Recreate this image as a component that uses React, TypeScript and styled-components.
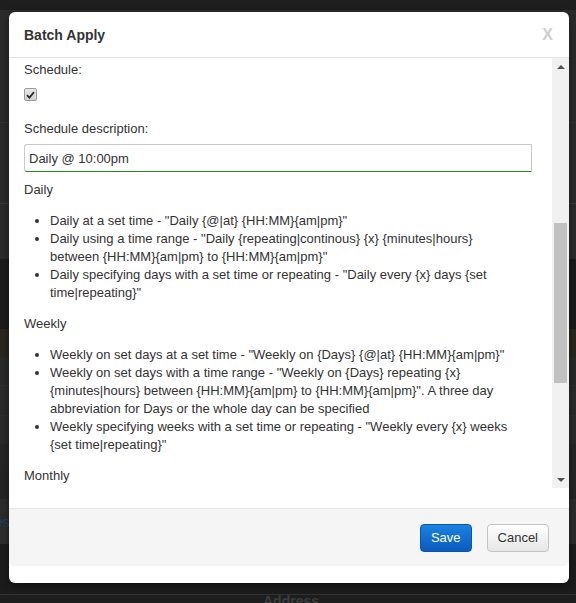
import React from "react";
import styled, { createGlobalStyle } from "styled-components";

const GlobalStyle = createGlobalStyle`
  html, body {
    margin: 0;
    padding: 0;
    background: #1e1e1e;
  }
  body {
    font-family: "Liberation Sans", Arial, Helvetica, sans-serif;
    font-size: 13px;
    line-height: 18px;
    color: #333;
  }
`;

interface Band {
  height: number;
  color: string;
  line?: string;
  text?: string;
  textColor?: string;
  textLeft?: number;
  bold?: boolean;
}

const bands: Band[] = [
  { height: 10, color: "#1e1e1e" },
  { height: 112, color: "#2b2b2b", line: "#333" },
  { height: 80, color: "#2b2b2b", line: "#3a3a3a" },
  { height: 55, color: "#2b2b2b" },
  { height: 70, color: "#1c1c1c" },
  { height: 28, color: "#2a2720" },
  { height: 28, color: "#2a2a2a", line: "#2f2f2f" },
  { height: 29, color: "#2b2b2b", line: "#2f2f2f" },
  { height: 28, color: "#2b2b2b" },
  { height: 27, color: "#262626" },
  { height: 28, color: "#252525" },
  { height: 45, color: "#2d2d2d", text: "es", textColor: "#23405e", textLeft: -5 },
  { height: 50, color: "#1c1c1c", line: "#333" },
  { height: 12, color: "#1e1e1e", text: "Address", textColor: "#3c3c3c", textLeft: 263, bold: true },
];

const Page = styled.div`
  position: relative;
  width: 576px;
  height: 603px;
  overflow: hidden;
  display: flex;
  flex-direction: column;
`;

const Stripe = styled.div<{ $h: number; $bg: string; $line?: string }>`
  flex: 0 0 ${({ $h }) => $h}px;
  background: ${({ $bg }) => $bg};
  border-bottom: ${({ $line }) => ($line ? `1px solid ${$line}` : "none")};
  display: flex;
  align-items: center;
  overflow: hidden;
`;

const StripeText = styled.span<{ $color: string; $left: number; $bold?: boolean }>`
  margin-left: ${({ $left }) => $left}px;
  color: ${({ $color }) => $color};
  font-size: 14px;
  font-weight: ${({ $bold }) => ($bold ? 700 : 400)};
  white-space: nowrap;
`;

const Dialog = styled.div`
  position: absolute;
  top: 12px;
  left: 9px;
  width: 560px;
  height: 571px;
  background: #fff;
  border-radius: 6px;
  box-shadow: 0 3px 9px rgba(0, 0, 0, 0.5);
  display: flex;
  flex-direction: column;
  overflow: hidden;
`;

const Header = styled.div`
  flex: none;
  height: 45px;
  border-bottom: 1px solid #e5e5e5;
  display: flex;
  align-items: center;
  justify-content: space-between;
  padding: 0 16px 0 15px;
`;

const Title = styled.h4`
  margin: 0;
  font-size: 14px;
  font-weight: 700;
  color: #333;
`;

const Close = styled.span`
  font-size: 16px;
  font-weight: 700;
  color: #cfcfcf;
  cursor: pointer;
`;

const Body = styled.div`
  flex: none;
  height: 430px;
  min-height: 0;
  display: flex;
  padding-bottom: 20px;
`;

const Content = styled.div`
  flex: 1;
  min-width: 0;
  overflow: hidden;
  padding: 3px 20px 0 15px;
`;

const Label = styled.div<{ $gap?: number }>`
  margin-top: ${({ $gap }) => $gap ?? 0}px;
`;

const CheckBox = styled.span`
  margin-top: 9px;
  display: flex;
  align-items: center;
  justify-content: center;
  width: 11px;
  height: 11px;
  border: 1px solid #9a9a9a;
  border-radius: 2px;
  background: linear-gradient(#e8e8e8, #d2d2d2);
`;

const TextInput = styled.input`
  display: block;
  box-sizing: border-box;
  width: 100%;
  height: 28px;
  margin-top: 6px;
  padding: 0 4px;
  border: 1px solid #c9c9c9;
  border-bottom-color: #1e8c1e;
  border-radius: 3px 0 0 3px;
  font: inherit;
  color: #333;
  outline: none;
`;

const SectionTitle = styled.p<{ $gap?: number }>`
  margin: ${({ $gap }) => $gap ?? 0}px 0 0;
`;

const List = styled.ul`
  margin: 13px 0;
  padding-left: 26px;
  list-style: disc;
`;

const Scrollbar = styled.div`
  flex: 0 0 17px;
  background: #f1f1f1;
  display: flex;
  flex-direction: column;
`;

const ArrowButton = styled.div<{ $down?: boolean }>`
  flex: 0 0 17px;
  display: flex;
  align-items: center;
  justify-content: center;

  &::before {
    content: "";
    width: 0;
    height: 0;
    border-left: 4px solid transparent;
    border-right: 4px solid transparent;
    ${({ $down }) =>
      $down ? "border-top: 4px solid #505050;" : "border-bottom: 4px solid #505050;"}
  }
`;

const Track = styled.div`
  flex: 1;
  display: flex;
  flex-direction: column;
`;

const Thumb = styled.div`
  margin: 0 2px;
  background: #c1c1c1;
`;

const Footer = styled.div`
  flex: none;
  height: 57px;
  border-top: 1px solid #e5e5e5;
  background: #f5f5f5;
  border-radius: 0 0 6px 6px;
  display: flex;
  align-items: center;
  justify-content: flex-end;
  gap: 15px;
  padding: 0 20px;
`;

const Button = styled.button<{ $primary?: boolean }>`
  height: 28px;
  padding: 0 10px;
  font: inherit;
  font-size: 13px;
  border-radius: 4px;
  cursor: pointer;
  color: ${({ $primary }) => ($primary ? "#fff" : "#333")};
  border: 1px solid ${({ $primary }) => ($primary ? "#0a56aa" : "#c4c4c4")};
  background: ${({ $primary }) =>
    $primary
      ? "linear-gradient(#1a82e0, #0a5bbd)"
      : "linear-gradient(#ffffff, #e6e6e6)"};
`;

// "\n" marks where the reference wraps a line
const daily = [
  'Daily at a set time - "Daily {@|at} {HH:MM}{am|pm}"',
  'Daily using a time range - "Daily {repeating|continous} {x} {minutes|hours}\nbetween {HH:MM}{am|pm} to {HH:MM}{am|pm}"',
  'Daily specifying days with a set time or repeating - "Daily every {x} days {set time|repeating}"',
];

const weekly = [
  'Weekly on set days at a set time - "Weekly on {Days} {@|at} {HH:MM}{am|pm}"',
  'Weekly on set days with a time range - "Weekly on {Days} repeating {x} {minutes|hours} between {HH:MM}{am|pm} to {HH:MM}{am|pm}". A three day abbreviation for Days or the whole day can be specified',
  'Weekly specifying weeks with a set time or repeating - "Weekly every {x} weeks {set time|repeating}"',
];

const TRACK = 396;
const THUMB_TOP = 148;
const THUMB_SIZE = 160;

function Item({ text }: { text: string }) {
  const parts = text.split("\n");
  return (
    <li>
      {parts.map((p, i) => (
        <React.Fragment key={i}>
          {i > 0 && <br />}
          {p}
        </React.Fragment>
      ))}
    </li>
  );
}

function App() {
  return (
    <>
      <GlobalStyle />
      <Page>
        {bands.map((b, i) => (
          <Stripe key={i} $h={b.height} $bg={b.color} $line={b.line}>
            {b.text && (
              <StripeText $color={b.textColor!} $left={b.textLeft!} $bold={b.bold}>
                {b.text}
              </StripeText>
            )}
          </Stripe>
        ))}

        <Dialog>
          <Header>
            <Title>Batch Apply</Title>
            <Close>X</Close>
          </Header>

          <Body>
            <Content>
              <Label>Schedule:</Label>
              <CheckBox>
                <svg width="9" height="8" viewBox="0 0 9 8">
                  <path d="M1 4.2 L3.4 6.6 L8 1.2" fill="none" stroke="#2b2b2b" strokeWidth="1.8" />
                </svg>
              </CheckBox>
              <Label $gap={19}>Schedule description:</Label>
              <TextInput defaultValue="Daily @ 10:00pm" />

              <SectionTitle $gap={9}>Daily</SectionTitle>
              <List>
                {daily.map((t) => (
                  <Item key={t} text={t} />
                ))}
              </List>

              <SectionTitle>Weekly</SectionTitle>
              <List>
                {weekly.map((t) => (
                  <Item key={t} text={t} />
                ))}
              </List>

              <SectionTitle>Monthly</SectionTitle>
            </Content>

            <Scrollbar>
              <ArrowButton />
              <Track>
                <Thumb style={{ marginTop: THUMB_TOP, height: Math.min(THUMB_SIZE, TRACK) }} />
              </Track>
              <ArrowButton $down />
            </Scrollbar>
          </Body>

          <Footer>
            <Button $primary>Save</Button>
            <Button>Cancel</Button>
          </Footer>
        </Dialog>
      </Page>
    </>
  );
}

export default App;
